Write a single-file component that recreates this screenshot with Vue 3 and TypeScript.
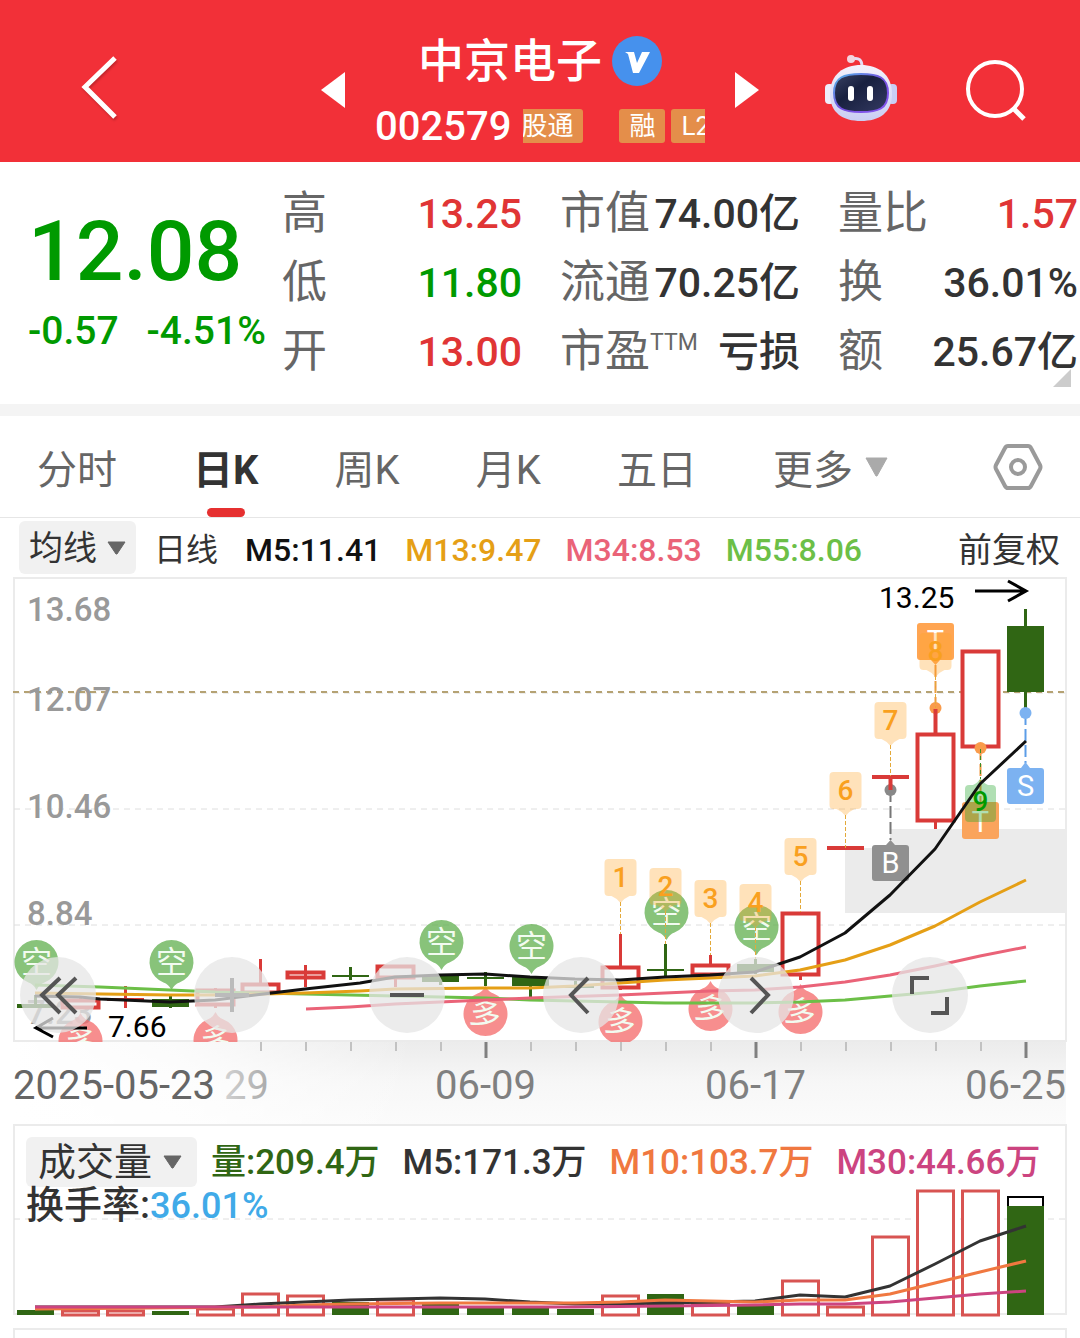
<script setup lang="ts">
import { ref } from 'vue'

type Tone = 'up' | 'down' | 'plain'
interface Quote { label: string; note?: string; value: string; tone: Tone }
interface Candle { up: boolean; top: number; bottom: number; high: number; low: number }
interface Badge { text: string; slot: number; top: number; end: number }
interface Pin { slot: number; y: number }

const quotes: Quote[] = [
  { label: '高', value: '13.25', tone: 'up' },
  { label: '市值', value: '74.00亿', tone: 'plain' },
  { label: '量比', value: '1.57', tone: 'up' },
  { label: '低', value: '11.80', tone: 'down' },
  { label: '流通', value: '70.25亿', tone: 'plain' },
  { label: '换', value: '36.01%', tone: 'plain' },
  { label: '开', value: '13.00', tone: 'up' },
  { label: '市盈', note: 'TTM', value: '亏损', tone: 'plain' },
  { label: '额', value: '25.67亿', tone: 'plain' },
]

const tabs = ['分时', '日K', '周K', '月K', '五日', '更多']
const activeTab = ref('日K')
const overlay = ref('均线')
const indicator = ref('成交量')

const averages = [
  { text: 'M5:11.41', color: '#111111' },
  { text: 'M13:9.47', color: '#e59f16' },
  { text: 'M34:8.53', color: '#ea6378' },
  { text: 'M55:8.06', color: '#6cbf47' },
]
const volumeAverages = [
  { text: '量:209.4万', color: '#306614' },
  { text: 'M5:171.3万', color: '#333333' },
  { text: 'M10:103.7万', color: '#f07840' },
  { text: 'M30:44.66万', color: '#cc4480' },
]

// Centre of a trading day's column
const cx = (slot: number): number => 35.5 + slot * 45

const candles: Candle[] = [
  { up: false, top: 1004, bottom: 1008, high: 995, low: 1008 },
  { up: true, top: 999, bottom: 1009, high: 997, low: 1009 },
  { up: true, top: 998, bottom: 1001, high: 986, low: 1008 },
  { up: false, top: 999, bottom: 1007, high: 996, low: 1008 },
  { up: true, top: 989, bottom: 1006, high: 988, low: 1008 },
  { up: true, top: 983, bottom: 994, high: 959, low: 994 },
  { up: true, top: 971, bottom: 979, high: 965, low: 987 },
  { up: false, top: 975, bottom: 977, high: 967, low: 980 },
  { up: true, top: 965, bottom: 979, high: 965, low: 987 },
  { up: false, top: 975, bottom: 982, high: 975, low: 985 },
  { up: false, top: 977, bottom: 979, high: 972, low: 986 },
  { up: false, top: 977, bottom: 986, high: 977, low: 997 },
  { up: false, top: 986, bottom: 988, high: 981, low: 990 },
  { up: true, top: 966, bottom: 989, high: 934, low: 990 },
  { up: false, top: 969, bottom: 971, high: 944, low: 978 },
  { up: true, top: 964, bottom: 976, high: 955, low: 976 },
  { up: false, top: 964, bottom: 972, high: 959, low: 974 },
  { up: true, top: 912, bottom: 976, high: 912, low: 980 },
  { up: true, top: 846, bottom: 850, high: 846, low: 850 },
  { up: true, top: 775, bottom: 779, high: 775, low: 790 },
  { up: true, top: 733, bottom: 822, high: 708, low: 829 },
  { up: true, top: 650, bottom: 748, high: 650, low: 748 },
  { up: false, top: 626, bottom: 692, high: 609, low: 712 },
]

const priceLabels = [
  { text: '13.68', y: 621 },
  { text: '12.07', y: 711 },
  { text: '10.46', y: 818 },
  { text: '8.84', y: 925 },
  { text: '7.23', y: 1024 },
]

const priceLines = [
  { color: '#6cbf47', points: '35,985 100,987 170,990 215,992 260,993 305,994 395,996 485,998 530,1000 620,1002 665,1003 755,1003 800,1002 845,1000 890,996 935,992 980,986 1026,981' },
  { color: '#ea6378', points: '306,1009 350,1007 395,1004 485,1000 530,998 620,995 710,991 755,990 800,987 845,982 890,975 935,966 980,956 1026,947' },
  { color: '#e59f16', points: '35,993 170,995 215,995 305,993 360,991 395,989 485,988 530,988 575,986 620,983 665,980 710,978 755,976 800,970 845,960 890,945 935,926 980,902 1026,880' },
  { color: '#111111', points: '35,996 80,997 100,999 170,1002 215,1000 255,995 305,989 360,983 395,977 440,975 485,974 530,977 575,979 620,980 665,977 710,975 755,972 800,957 845,933 890,895 935,849 980,784 1026,741' },
]

const shortPins: Pin[] = [
  { slot: 0, y: 962 }, { slot: 3, y: 962 }, { slot: 9, y: 942 },
  { slot: 11, y: 946 }, { slot: 14, y: 912 }, { slot: 16, y: 927 },
]
const longPins: Pin[] = [
  { slot: 1, y: 1041 }, { slot: 4, y: 1040 }, { slot: 10, y: 1014 },
  { slot: 13, y: 1022 }, { slot: 15, y: 1009 }, { slot: 17, y: 1012 },
]
const badges: Badge[] = [
  { text: '1', slot: 13, top: 859, end: 934 },
  { text: '2', slot: 14, top: 868, end: 944 },
  { text: '3', slot: 15, top: 880, end: 955 },
  { text: '4', slot: 16, top: 884, end: 959 },
  { text: '5', slot: 17, top: 838, end: 912 },
  { text: '6', slot: 18, top: 772, end: 848 },
  { text: '7', slot: 19, top: 702, end: 776 },
  { text: '8', slot: 20, top: 633, end: 708 },
]
const minorTicks = [5, 6, 7, 8, 9, 11, 12, 13, 14, 15, 17, 18, 19, 20, 21]
const majorTicks = [10, 16, 22]

const volumes = [
  [0, 1310], [1, 1310], [1, 1310], [0, 1311], [1, 1308], [1, 1293], [1, 1295], [0, 1302],
  [1, 1299], [0, 1304], [0, 1307], [0, 1307], [0, 1309], [1, 1295], [0, 1294], [1, 1303],
  [0, 1305], [1, 1280], [1, 1306], [1, 1236], [1, 1190], [1, 1190], [0, 1206],
].map(([up, top]) => ({ up: up === 1, top }))

const volumeLines = [
  { color: '#333333', points: '35,1307 215,1307 260,1304 305,1302 350,1300 395,1299 440,1298 485,1299 530,1302 575,1304 620,1304 665,1303 755,1301 800,1295 845,1297 890,1286 935,1264 980,1241 1026,1226' },
  { color: '#f07840', points: '35,1309 260,1307 305,1305 350,1304 440,1303 575,1303 620,1302 665,1300 710,1301 755,1302 800,1300 845,1300 890,1294 935,1283 980,1272 1026,1261' },
  { color: '#cc4480', points: '35,1307 575,1307 755,1305 800,1304 845,1304 890,1302 935,1298 980,1294 1026,1291' },
]
</script>

<template>
  <div class="page">
    <header class="topbar">
      <button class="icon-btn back" aria-label="返回">
        <svg width="40" height="66" viewBox="0 0 40 66"><path d="M35 3 5 32 35 62" fill="none" stroke="#fff" stroke-width="5" /></svg>
      </button>
      <div class="stock">
        <button class="icon-btn" aria-label="上一只">
          <svg width="24" height="36" viewBox="0 0 24 36"><path d="M24 0V36L0 18Z" fill="#fff" /></svg>
        </button>
        <div class="identity">
          <h1 class="name">
            中京电子
            <svg width="50" height="50" viewBox="0 0 50 50" aria-label="认证">
              <circle cx="25" cy="25" r="25" fill="#4691ed" />
              <path d="M13 16H22L25 27 30 16H38L27 37H21L16 18Z" fill="#fff" />
            </svg>
          </h1>
          <div class="code-row">
            <span class="code">002579</span>
            <div class="tags">
              <span class="tag first">股通</span>
              <span class="tag">融</span>
              <span class="tag">L2</span>
            </div>
          </div>
        </div>
        <button class="icon-btn" aria-label="下一只">
          <svg width="24" height="36" viewBox="0 0 24 36"><path d="M0 0V36L24 18Z" fill="#fff" /></svg>
        </button>
      </div>
      <div class="tools">
        <button class="icon-btn" aria-label="智能助手">
          <svg width="72" height="72" viewBox="0 0 72 72">
            <defs>
              <linearGradient id="shell" x1="0" y1="0" x2="0" y2="1">
                <stop offset="0" stop-color="#f4f2fc" /><stop offset="1" stop-color="#c9cdf3" />
              </linearGradient>
              <linearGradient id="rim" x1="0" y1="0" x2="1" y2="1">
                <stop offset="0" stop-color="#52b8e8" /><stop offset=".5" stop-color="#7450e0" /><stop offset="1" stop-color="#8654ee" />
              </linearGradient>
              <linearGradient id="visor" x1="0" y1="0" x2="1" y2="1">
                <stop offset="0" stop-color="#3a4264" /><stop offset=".4" stop-color="#18203f" /><stop offset="1" stop-color="#343a62" />
              </linearGradient>
            </defs>
            <path d="M27 5C34 3 37 6 37 13" fill="none" stroke="#e6dcf4" stroke-width="3" />
            <circle cx="26" cy="5" r="4" fill="#f3d5df" />
            <rect x="0" y="30" width="9" height="20" rx="4" fill="#eeeefb" />
            <rect x="63" y="30" width="9" height="20" rx="4" fill="#c9cef5" />
            <path d="M36 11C53 11 67 20 67 40 67 59 54 67 36 67S5 59 5 40C5 20 19 11 36 11Z" fill="url(#shell)" />
            <path d="M36 20C53 20 63 23 63 39S53 58 36 58 9 55 9 39 19 20 36 20Z" fill="url(#visor)" stroke="url(#rim)" stroke-width="2" />
            <rect x="23" y="32" width="6" height="15" rx="3" fill="#fff" />
            <rect x="42" y="32" width="6" height="15" rx="3" fill="#fff" />
          </svg>
        </button>
        <button class="icon-btn" aria-label="搜索">
          <svg width="62" height="62" viewBox="0 0 62 62" fill="none" stroke="#fff" stroke-width="4">
            <circle cx="30" cy="30" r="27" /><path d="M48 49 59 60" stroke-width="5" />
          </svg>
        </button>
      </div>
    </header>

    <section class="summary">
      <div class="last">
        <strong class="price">12.08</strong>
        <div class="change"><span>-0.57</span><span>-4.51%</span></div>
      </div>
      <dl class="quotes">
        <div v-for="q in quotes" :key="q.label" class="quote">
          <dt>{{ q.label }}<sup v-if="q.note">{{ q.note }}</sup></dt>
          <dd :class="q.tone">{{ q.value }}</dd>
        </div>
      </dl>
      <i class="fold"></i>
    </section>

    <nav class="tabs">
      <div class="tab-list">
        <button
          v-for="t in tabs"
          :key="t"
          class="tab"
          :class="{ active: t === activeTab }"
          @click="activeTab = t"
        >
          {{ t }}
          <svg v-if="t === '更多'" width="23" height="20" viewBox="0 0 23 20"><path d="M1 1H22L12 19H11Z" fill="#aaa" stroke="#aaa" stroke-linejoin="round" /></svg>
        </button>
      </div>
      <button class="icon-btn" aria-label="设置">
        <svg width="50" height="48" viewBox="0 0 50 48" fill="none" stroke="#9a9a9a" stroke-width="4">
          <path d="M15 3H35Q37 3 38 5L47 22Q48 24 47 26L38 43Q37 45 35 45H15Q13 45 12 43L3 26Q2 24 3 22L12 5Q13 3 15 3Z" />
          <circle cx="25" cy="24" r="7" />
        </svg>
      </button>
    </nav>

    <div class="legend">
      <label class="picker small">
        <select v-model="overlay" aria-label="主图指标"><option>均线</option></select>
        <svg width="19" height="14" viewBox="0 0 19 14"><path d="M1 1H18L10 13H9Z" fill="#666" stroke="#666" stroke-linejoin="round" /></svg>
      </label>
      <span class="period">日线</span>
      <span v-for="a in averages" :key="a.text" :style="{ color: a.color }">{{ a.text }}</span>
      <button class="adjust">前复权</button>
    </div>

    <section class="chart">
      <svg class="plot" viewBox="0 577 1080 547" role="img" aria-label="日K线图">
        <defs>
          <clipPath id="plotClip"><rect x="14" y="577" width="1053" height="465" /></clipPath>
          <linearGradient id="shade" x1="0" y1="0" x2="0" y2="1">
            <stop offset="0" stop-color="#ececec" /><stop offset=".5" stop-color="#f7f7f7" /><stop offset="1" stop-color="#fbfbfb" />
          </linearGradient>
          <linearGradient id="veil" x1="0" y1="0" x2="1" y2="0">
            <stop offset="0" stop-color="#fff" /><stop offset=".4" stop-color="#fff" stop-opacity=".8" /><stop offset="1" stop-color="#fff" stop-opacity="0" />
          </linearGradient>
          <linearGradient id="fade" x1="0" y1="0" x2="1" y2="0">
            <stop offset="0" stop-color="#d2d2d2" /><stop offset="1" stop-color="#aaa" />
          </linearGradient>
        </defs>

        <rect x="14" y="1042" width="1052" height="82" fill="url(#shade)" />
        <rect x="14" y="1042" width="400" height="82" fill="url(#veil)" />
        <path d="M845 848H890V829H1066V913H845Z" fill="#ebebeb" />
        <rect x="14" y="578" width="1052" height="463" fill="none" stroke="#ebebeb" stroke-width="2" />
        <path d="M14 693H1066M14 809H1066M14 925H1066" stroke="#dedede" stroke-dasharray="6 5" />
        <path d="M13 692H1066" stroke="#b5a273" stroke-width="2" stroke-dasharray="6 5" />
        <text v-for="p in priceLabels" :key="p.text" class="axis" x="27" :y="p.y">{{ p.text }}</text>

        <g v-for="(c, i) in candles" :key="i" :stroke="c.up ? '#d93a38' : '#306614'" stroke-width="3">
          <path :d="`M${cx(i)} ${c.high}V${c.top}M${cx(i)} ${c.bottom}V${c.low}`" />
          <rect
            v-if="c.up && c.bottom - c.top > 5"
            :x="cx(i) - 18"
            :y="c.top + 1.5"
            width="36"
            :height="c.bottom - c.top - 3"
            fill="#fff"
            stroke-width="4"
          />
          <rect v-else :x="cx(i) - 18.5" :y="c.top" width="37" :height="c.bottom - c.top" :fill="c.up ? '#d93a38' : '#306614'" stroke="none" />
          <path v-if="i === 6 || i === 7 || i === 10 || i === 14" :d="`M${cx(i)} ${c.high}V${c.low}`" />
        </g>

        <g clip-path="url(#plotClip)">
          <g v-for="p in shortPins" :key="'k' + p.slot">
            <path :transform="`translate(${cx(p.slot) + 1} ${p.y})`" d="M-8 20.500A22 22 0 1 1 8 20.500Q3 22 0 28-3 22-8 20.500Z" fill="#5fae4c" fill-opacity=".74" />
            <text class="pin-text" :x="cx(p.slot) + 1" :y="p.y + 11">空</text>
          </g>
          <g v-for="p in longPins" :key="'d' + p.slot">
            <path :transform="`translate(${cx(p.slot)} ${p.y})`" d="M-8-20.500A22 22 0 1 0 8-20.500Q3-22 0-28-3-22-8-20.500Z" fill="#f46a6a" fill-opacity=".76" />
            <text class="pin-text" :x="cx(p.slot)" :y="p.y + 11" :transform="`rotate(12 ${cx(p.slot)} ${p.y})`">多</text>
          </g>
        </g>

        <g class="trades">
          <path d="M890.500 790V840" stroke="#777" /><path d="M935.500 665V708" stroke="#f0953f" />
          <path d="M980.500 748V802" stroke="#f0953f" /><path d="M1025.500 713V763" stroke="#5c9de8" />
        </g>
        <circle cx="890.500" cy="790" r="6" fill="#888" />
        <circle cx="935.500" cy="708" r="6" fill="#f99b4b" />
        <circle cx="980.500" cy="748" r="6" fill="#f99b4b" />
        <circle cx="1025.500" cy="713" r="6" fill="#7cb2f1" />
        <path d="M935.500 709V733M890.500 777V790" stroke="#d93a38" stroke-width="4" />
        <path d="M980.500 749V779" stroke="#3c8c28" stroke-dasharray="4 3" />

        <path d="M920 623H951Q954 623 954 626V657Q954 660 951 660H940L935.500 665 931 660H920Q917 660 917 657V626Q917 623 920 623Z" fill="#ffa552" />
        <text class="trade" x="935.500" y="651">T</text>
        <rect x="962" y="802" width="37" height="37" rx="3" fill="#faa45c" />
        <text class="trade" x="980.500" y="832">T</text>
        <path d="M875 845H886L890.500 840 895 845H906Q909 845 909 848V878Q909 881 906 881H875Q872 881 872 878V848Q872 845 875 845Z" fill="#909090" />
        <text class="trade" x="890.500" y="873">B</text>
        <path d="M1010 768H1021L1025.500 762 1030 768H1041Q1044 768 1044 771V801Q1044 804 1041 804H1010Q1007 804 1007 801V771Q1007 768 1010 768Z" fill="#7cb2f1" />
        <text class="trade" x="1025.500" y="796">S</text>

        <g v-for="b in badges" :key="b.text">
          <path :d="`M${cx(b.slot)} ${b.top + 43}V${b.end}`" stroke="#e3a93a" stroke-dasharray="4 2" />
          <path
            :transform="`translate(${cx(b.slot)} ${b.top})`"
            d="M-12 0H12Q16 0 16 4V33Q16 37 12 37H9Q4 39 0 44-4 39-9 37H-12Q-16 37-16 33V4Q-16 0-12 0Z"
            fill="#ffa528"
            fill-opacity=".32"
          />
          <text class="count" :x="cx(b.slot)" :y="b.top + 28">{{ b.text }}</text>
        </g>
        <path d="M969 785H973Q978 783 980.500 778 983 783 988 785H992Q996 785 996 789V818Q996 822 992 822H969Q965 822 965 818V789Q965 785 969 785Z" fill="#23a52d" fill-opacity=".36" />
        <text class="count nine" x="980.500" y="811">9</text>

        <polyline v-for="l in priceLines" :key="l.color" :points="l.points" fill="none" :stroke="l.color" stroke-width="3" stroke-linejoin="round" />

        <text class="extreme" x="879" y="608">13.25</text>
        <path d="M975 591H1026M1008 581 1026 591 1008 601" fill="none" stroke="#000" stroke-width="3" />
        <text class="extreme" x="108" y="1037">7.66</text>
        <path d="M87 1028H36M53 1018 36 1028 53 1037" fill="none" stroke="#000" stroke-width="3" />

        <path v-for="t in minorTicks" :key="t" :d="`M${cx(t) + 0.5} 1042V1051`" stroke="#c2c2c2" stroke-width="2" />
        <path v-for="t in majorTicks" :key="t" :d="`M${cx(t) + 0.5} 1042V1058`" stroke="#808080" stroke-width="3" />
        <text class="date first-date" x="13" y="1099">2025-05-23</text>
        <text class="date" x="224" y="1099" fill="url(#fade)">29</text>
        <text class="date" x="435" y="1099">06-09</text>
        <text class="date" x="705" y="1099">06-17</text>
        <text class="date" x="965" y="1099">06-25</text>
      </svg>

      <div class="controls">
        <button aria-label="最早"><svg viewBox="0 0 76 76"><path d="M40 21 22 38 40 56M56 21 38 38 56 56" /></svg></button>
        <button aria-label="放大"><svg viewBox="0 0 76 76" class="dim"><path d="M21 38H55M38 21V55" /></svg></button>
        <button aria-label="缩小"><svg viewBox="0 0 76 76"><path d="M21 38H55" /></svg></button>
        <button aria-label="向前"><svg viewBox="0 0 76 76"><path d="M45 21 28 38 45 56" /></svg></button>
        <button aria-label="向后"><svg viewBox="0 0 76 76"><path d="M33 21 50 38 33 56" /></svg></button>
        <button aria-label="全屏"><svg viewBox="0 0 76 76"><path d="M20 37V21H37M55 40V56H39" /></svg></button>
      </div>
    </section>

    <section class="volume">
      <svg class="plot" viewBox="0 1124 1080 214" role="img" aria-label="成交量图">
        <rect x="14" y="1125" width="1052" height="189" fill="none" stroke="#ebebeb" stroke-width="2" />
        <path d="M14 1340V1329H1066V1340" fill="none" stroke="#ebebeb" stroke-width="2" />
        <path d="M14 1219H1066" stroke="#dedede" stroke-dasharray="6 5" />
        <rect x="1008" y="1197" width="35" height="20" fill="#fff" stroke="#000" stroke-width="2" />
        <template v-for="(v, i) in volumes" :key="i">
          <rect v-if="v.up" :x="cx(i) - 18" :y="v.top + 1" width="36" :height="1314 - v.top" fill="#fff" stroke="#d85452" stroke-width="3" />
          <rect v-else :x="cx(i) - 18.5" :y="v.top" width="37" :height="1315 - v.top" fill="#306614" />
        </template>
        <polyline v-for="l in volumeLines" :key="l.color" :points="l.points" fill="none" :stroke="l.color" stroke-width="3" stroke-linejoin="round" />
      </svg>
      <div class="volume-head">
        <div class="volume-row">
          <label class="picker">
            <select v-model="indicator" aria-label="副图指标"><option>成交量</option></select>
            <svg width="19" height="14" viewBox="0 0 19 14"><path d="M1 1H18L10 13H9Z" fill="#666" stroke="#666" stroke-linejoin="round" /></svg>
          </label>
          <span v-for="a in volumeAverages" :key="a.text" :style="{ color: a.color }">{{ a.text }}</span>
        </div>
        <div class="turnover">换手率:<span>36.01%</span></div>
      </div>
    </section>
  </div>
</template>

<style>
body {
  margin: 0;
  background: #fff;
}
</style>

<style scoped>
.page {
  font-family: Roboto, "Noto Sans CJK SC", sans-serif;
  color: #333;
  overflow: hidden;
}

button,
select {
  font: inherit;
  color: inherit;
  border: 0;
  padding: 0;
  background: none;
  appearance: none;
  cursor: pointer;
}

svg {
  display: block;
  flex-shrink: 0;
}

.topbar {
  display: grid;
  grid-template-columns: 1fr auto 1fr;
  align-items: center;
  height: 162px;
  padding: 18px 53px 0;
  box-sizing: border-box;
  background: #f23038;
  color: #fff;
}

.back {
  justify-self: start;
  margin: 0 0 4px 27px;
}

.back svg {
  filter: drop-shadow(1px 2px 1px #0003);
}

.stock {
  display: flex;
  align-items: center;
  gap: 30px;
}

.identity {
  width: 330px;
  margin-top: 6px;
}

.name {
  display: flex;
  align-items: center;
  justify-content: center;
  gap: 10px;
  margin: 0;
  font-size: 46px;
  line-height: 66px;
  font-weight: 500;
}

.code-row {
  display: flex;
  align-items: center;
  height: 64px;
  gap: 12px;
}

.code {
  font-size: 40px;
  font-weight: 500;
}

.tags {
  display: flex;
  flex: 1;
  gap: 6px;
  overflow: hidden;
}

.tag {
  flex-shrink: 0;
  padding: 0 10px;
  border-radius: 3px;
  background: #e48e4a;
  font-size: 26px;
  line-height: 34px;
}

.tag.first {
  margin: 0 30px 0 -12px;
}

.tools {
  display: flex;
  align-items: center;
  justify-content: flex-end;
  gap: 68px;
}

.summary {
  position: relative;
  display: grid;
  grid-template-columns: 282fr 796fr;
  height: 242px;
  padding-right: 2px;
  box-sizing: border-box;
}

.last {
  color: #009a00;
  padding: 42px 0 0 28px;
}

.price {
  display: block;
  font-size: 84px;
  line-height: 96px;
  font-weight: 500;
}

.change {
  display: flex;
  gap: 28px;
  font-size: 39px;
  line-height: 62px;
  font-weight: 500;
}

.quotes {
  display: grid;
  grid-template-columns: repeat(3, 1fr);
  grid-auto-rows: 69px;
  column-gap: 38px;
  margin: 0;
  padding-top: 17px;
}

.quote {
  display: flex;
  align-items: center;
  justify-content: space-between;
  white-space: nowrap;
}

.quote dt {
  display: flex;
  font-size: 45px;
  line-height: 68px;
  color: #666;
}

.quote sup {
  font-size: 23px;
  line-height: 50px;
  vertical-align: top;
}

.quote dd {
  margin: 0;
  font-size: 41px;
  line-height: 68px;
  font-weight: 500;
}

.up {
  color: #e03535;
}

.down {
  color: #009a00;
}

.fold {
  position: absolute;
  right: 9px;
  bottom: 17px;
  width: 18px;
  height: 18px;
  background: #ccc;
  clip-path: polygon(100% 0, 100% 100%, 0 100%);
}

.tabs {
  display: flex;
  align-items: center;
  justify-content: space-between;
  height: 114px;
  box-sizing: border-box;
  padding: 0 37px;
  border-top: 12px solid #f4f4f4;
  border-bottom: 1px solid #e6e6e6;
}

.tab-list {
  display: flex;
  justify-content: space-between;
  flex: 0 1 851px;
  height: 100%;
}

.tab {
  position: relative;
  display: flex;
  align-items: center;
  gap: 12px;
  font-size: 40px;
  color: #666;
}

.tab.active {
  color: #333;
  font-weight: 700;
}

.tab.active::after {
  content: "";
  position: absolute;
  left: 50%;
  bottom: 0;
  width: 38px;
  height: 9px;
  margin-left: -19px;
  border-radius: 5px;
  background: #e63030;
}

.legend {
  display: flex;
  align-items: center;
  gap: 24px;
  height: 59px;
  padding: 0 20px 0 19px;
  font-size: 32px;
  line-height: 36px;
  font-weight: 500;
}

.legend > span {
  padding-top: 4px;
}

.legend > .period {
  margin: 0 3px 0 -6px;
  font-weight: 400;
}

.picker {
  display: flex;
  align-items: center;
  gap: 10px;
  height: 50px;
  padding: 0 15px 0 12px;
  border-radius: 6px;
  background: #f1f1f1;
  font-size: 38px;
  font-weight: 400;
}

.picker.small {
  height: 53px;
  padding: 0 10px;
  font-size: 34px;
}

.adjust {
  margin-left: auto;
  padding-top: 4px;
  font-size: 34px;
  font-weight: 400;
}

.chart {
  position: relative;
}

.plot {
  width: 100%;
  height: auto;
}

.axis {
  font-size: 33px;
  font-weight: 500;
  fill: #999;
}

.pin-text {
  font-size: 31px;
  fill: #f2fbf0;
  text-anchor: middle;
}

.trades {
  stroke-width: 2;
  stroke-dasharray: 12 4;
}

.trade {
  font-size: 29px;
  fill: #fff;
  text-anchor: middle;
}

.count {
  font-size: 28px;
  font-weight: 500;
  fill: #f9a01f;
  text-anchor: middle;
}

.nine {
  fill: #009a00;
}

.extreme {
  font-size: 30px;
  fill: #000;
}

.date {
  font-size: 40px;
}

.date:not([fill]) {
  fill: #808080;
}

.date.first-date {
  fill: #666;
}

.controls {
  position: absolute;
  left: 20px;
  right: 112px;
  bottom: 91px;
  display: flex;
  justify-content: space-between;
}

.controls button {
  width: 76px;
  height: 76px;
  border-radius: 50%;
  background: rgb(229 229 229 / 75%);
}

.controls svg {
  fill: none;
  stroke: #555;
  stroke-width: 4;
}

.controls .dim {
  stroke: #bbb;
}

.volume {
  display: grid;
}

.volume > * {
  grid-area: 1 / 1;
}

.volume-head {
  padding: 13px 20px 0 26px;
}

.volume-row {
  display: flex;
  align-items: center;
  gap: 23px;
  height: 50px;
  font-size: 35px;
  line-height: 46px;
  font-weight: 500;
  white-space: nowrap;
}

.volume-row .picker {
  margin-right: -9px;
}

.volume-row > span {
  padding-top: 2px;
}

.turnover {
  font-size: 38px;
  line-height: 36px;
  font-weight: 500;
}

.turnover span {
  font-size: 36px;
  color: #40aae8;
}
</style>
